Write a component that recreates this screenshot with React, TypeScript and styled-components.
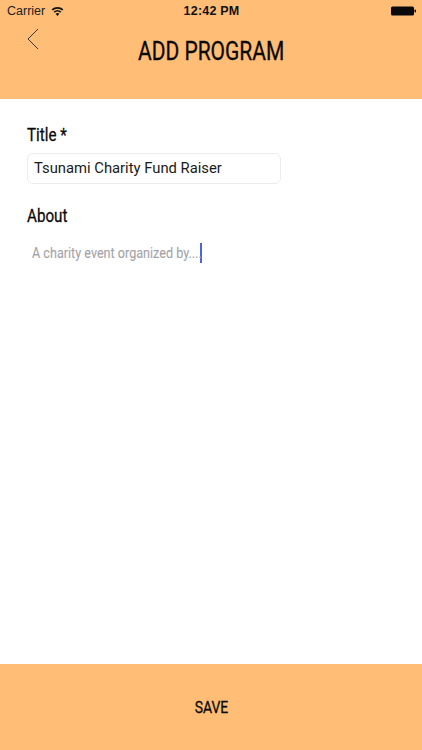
import React from 'react';
import styled, { createGlobalStyle } from 'styled-components';

const Global = createGlobalStyle`
  html, body { margin: 0; padding: 0; height: 100%; }
  body { background: #fff; font-family: Roboto, "Liberation Sans", sans-serif; overflow: hidden; }
`;

const Screen = styled.div`
  width: 422px;
  height: 750px;
  display: flex;
  flex-direction: column;
  background: #fff;
`;

const Header = styled.header`
  height: 99px;
  background: #ffbd76;
  flex-shrink: 0;
  display: flex;
  flex-direction: column;
`;

const StatusBar = styled.div`
  height: 22px;
  padding: 0 6px 0 7px;
  display: grid;
  grid-template-columns: 1fr auto 1fr;
  align-items: center;
  font-family: "Liberation Sans", Arial, sans-serif;
  font-size: 12.5px;
  color: #222;
`;

const Carrier = styled.div`
  display: flex;
  align-items: center;
  gap: 6px;
`;

const Clock = styled.div`
  font-weight: 700;
  font-size: 12.5px;
  letter-spacing: 0.2px;
  color: #111;
`;

const Battery = styled.svg`
  justify-self: end;
`;

const NavBar = styled.div`
  display: flex;
  flex: 1;
  padding-left: 27px;
  position: relative;
`;

const Back = styled.svg`
  margin-top: 6px;
`;

const Condensed = styled.span<{ $size: number; $stroke?: number; $scale?: number; $origin?: string; $color?: string }>`
  display: inline-block;
  font-family: Roboto, "Liberation Sans", sans-serif;
  font-size: ${(p) => p.$size}px;
  font-weight: 400;
  -webkit-text-stroke: ${(p) => p.$stroke ?? 0.3}px currentColor;
  color: ${(p) => p.$color ?? '#0a0a0a'};
  line-height: 1;
  white-space: nowrap;
  transform: scaleX(${(p) => p.$scale ?? 0.82});
  transform-origin: ${(p) => p.$origin ?? 'center'};
`;

const NavTitle = styled.div`
  position: absolute;
  left: 0;
  right: 0;
  top: 17px;
  text-align: center;
`;

const Body = styled.main`
  flex: 1;
  padding: 26px 27px 0;
  display: flex;
  flex-direction: column;
`;

const Label = styled.div`
  height: 20px;
  display: flex;
  align-items: center;
`;

const Input = styled.div`
  width: 254px;
  height: 31px;
  box-sizing: border-box;
  margin-top: 8px;
  padding: 0 6px 1px;
  display: flex;
  align-items: center;
  border: 1px solid #ececec;
  border-radius: 6px;
  font-size: 14.8px;
  color: #1a1a1a;
`;

const AboutLabel = styled(Label)`
  margin-top: 22px;
`;

const TextArea = styled.div`
  margin-top: 17px;
  padding-left: 5px;
  height: 20px;
  display: flex;
  align-items: center;
`;

const Caret = styled.span`
  width: 2px;
  height: 20px;
  background: #4a66d8;
  margin-left: -34px;
`;

const Footer = styled.footer`
  height: 86px;
  flex-shrink: 0;
  background: #ffbd76;
  display: flex;
  align-items: center;
  justify-content: center;
`;

export default function App() {
  return (
    <Screen>
      <Global />
      <Header>
        <StatusBar>
          <Carrier>
            Carrier
            <svg width="13" height="10" viewBox="0 0 13 10" fill="#111">
              <path d="M6.5 10 4.6 7.8a2.9 2.9 0 0 1 3.8 0Z" />
              <path d="M3.7 6.8 2.7 5.6a5.8 5.8 0 0 1 7.6 0L9.3 6.8a4.2 4.2 0 0 0-5.6 0Z" />
              <path d="M1.8 4.6.6 3.3a8.9 8.9 0 0 1 11.8 0l-1.2 1.3a7.2 7.2 0 0 0-9.4 0Z" />
            </svg>
          </Carrier>
          <Clock>12:42 PM</Clock>
          <Battery width="25" height="10" viewBox="0 0 25 10">
            <rect x="0" y="0.5" width="23" height="9" rx="1.5" fill="#0a0a0a" />
            <rect x="23.5" y="3.5" width="1.5" height="3" rx="0.7" fill="#0a0a0a" />
          </Battery>
        </StatusBar>
        <NavBar>
          <Back width="12" height="22" viewBox="0 0 12 22" fill="none" stroke="#333" strokeWidth="1">
            <path d="M11 1 1 11l10 10" />
          </Back>
          <NavTitle>
            <Condensed $size={25} $scale={0.84}>ADD PROGRAM</Condensed>
          </NavTitle>
        </NavBar>
      </Header>
      <Body>
        <Label>
          <Condensed $size={18.5} $scale={0.82} $origin="left">Title *</Condensed>
        </Label>
        <Input>Tsunami Charity Fund Raiser</Input>
        <AboutLabel>
          <Condensed $size={18.5} $scale={0.82} $origin="left">About</Condensed>
        </AboutLabel>
        <TextArea>
          <Condensed $size={15} $stroke={0.1} $scale={0.84} $origin="left" $color="#a3a3a8">A charity event organized by....</Condensed>
          <Caret />
        </TextArea>
      </Body>
      <Footer>
        <Condensed $size={17} $scale={0.82}>SAVE</Condensed>
      </Footer>
    </Screen>
  );
}
